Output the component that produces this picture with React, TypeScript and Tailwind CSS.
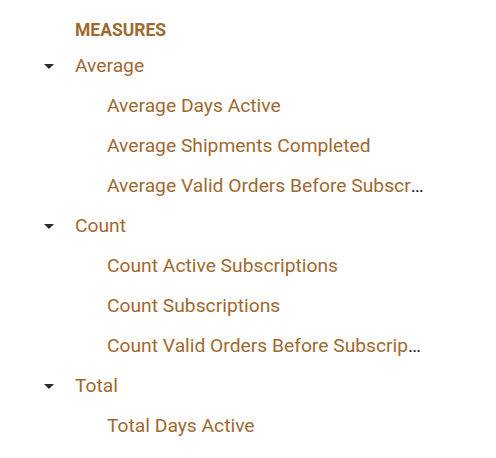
const groups = [
  {
    name: 'Average',
    items: ['Average Days Active', 'Average Shipments Completed', 'Average Valid Orders Before Subscription'],
  },
  {
    name: 'Count',
    items: ['Count Active Subscriptions', 'Count Subscriptions', 'Count Valid Orders Before Subscription'],
  },
  {
    name: 'Total',
    items: ['Total Days Active'],
  },
];

const Caret = () => (
  <svg width="10" height="5" viewBox="0 0 10 5" className="shrink-0">
    <path d="M0 0 L10 0 L5 5 Z" fill="#2b2b2b" />
  </svg>
);

export default function App() {
  return (
    <div className="w-[496px] h-[458px] bg-white font-['Roboto',sans-serif] text-[#a0692f]">
      <div className="w-[424px] pt-[14px]">
        <div className="h-8 flex items-center pl-[75px] text-[17.5px] font-bold">MEASURES</div>
        {groups.map((g) => (
          <div key={g.name}>
            <div className="h-10 flex items-center pl-[44px] gap-[21px]">
              <Caret />
              <span className="text-[19.25px]">{g.name}</span>
            </div>
            {g.items.map((it) => (
              <div key={it} className="h-10 flex items-center pl-[107px] min-w-0">
                {/* ellipsis takes the outer colour, text keeps the brown */}
                <span className="text-[19.25px] truncate text-[#222]">
                  <span className="text-[#a0692f]">{it}</span>
                </span>
              </div>
            ))}
          </div>
        ))}
      </div>
    </div>
  );
}
